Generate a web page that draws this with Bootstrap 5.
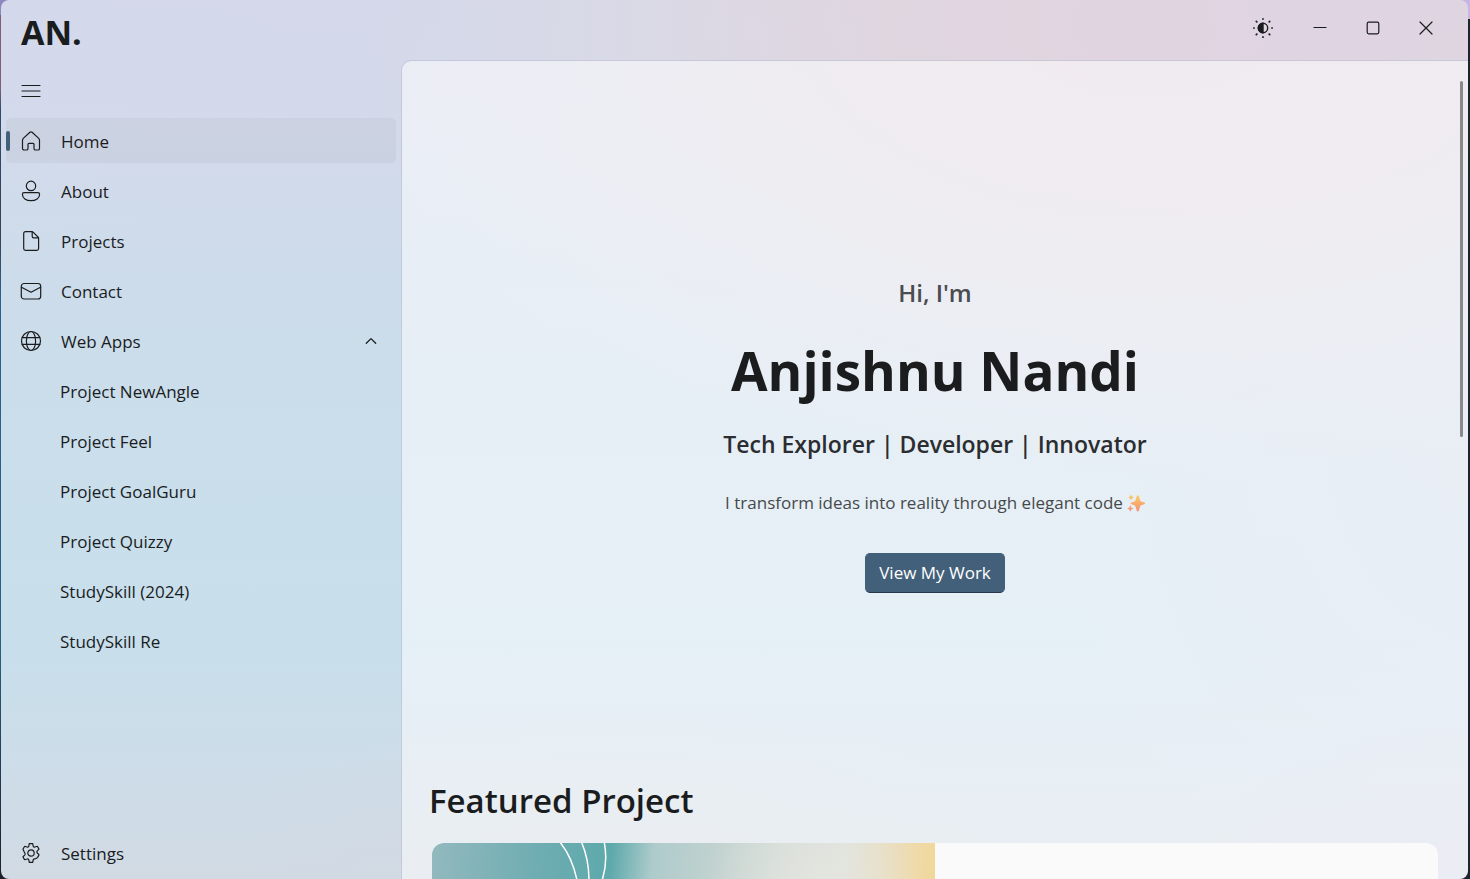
<!DOCTYPE html>
<html lang="en">
<head>
<meta charset="utf-8">
<meta name="viewport" content="width=device-width, initial-scale=1">
<title>Anjishnu Nandi</title>
<link href="https://cdn.jsdelivr.net/npm/bootstrap@5.3.0/dist/css/bootstrap.min.css" rel="stylesheet">
<style>
  :root {
    --ink: #1a1c1e;
    --accent: #43607a;
    --side: 400px;
  }
  body {
    font-family: "Open Sans", "Noto Sans", sans-serif;
    font-size: 17px;
    line-height: 24px;
    color: var(--ink);
    background:
      linear-gradient(90deg, transparent 50%, #c9b5e2 50%) top / 100% 19px no-repeat,
      linear-gradient(90deg, #8e86c0 50%, transparent 50%) top / 100% 15px no-repeat,
      linear-gradient(90deg, transparent 50%, #1d2430 50%),
      linear-gradient(#7d5f74 0, #7d5f74 90px, #2c4d70 110px, #3b3f52 230px, #2a6290 300px, #2a5f80 650px, #1d1c2c 100%);
  }
  svg { display: block; fill: none; stroke-linecap: round; stroke-linejoin: round; }
  .line-icon { stroke: currentColor; }

  /* App window with its soft mesh background */
  .app-window {
    margin: 0 2px 0 1px;
    border-radius: 8px;
    background:
      radial-gradient(ellipse 24% 30% at 92% 0, #dfd5e2 0, transparent 100%),
      radial-gradient(ellipse 54% 52% at 78% 3%, #e2d4df 0, #e0d6dfdd 40%, #dcdae480 72%, transparent 100%),
      radial-gradient(ellipse 40% 30% at 22% 0, #d4d8ea 0, transparent 100%),
      radial-gradient(ellipse 30% 60% at 102% 50%, #d3d9e8cc 0, transparent 100%),
      radial-gradient(ellipse 28% 20% at 42% 100%, #d2d9e3 0, transparent 100%),
      radial-gradient(ellipse 24% 20% at 102% 100%, #d5d6e8 0, transparent 100%),
      linear-gradient(#d4d9eb 0, #d2dbeb 15%, #cddcea 32%, #cadeeb 50%, #c8dfeb 74%, #cddde9 87%, #d1dae3 100%);
  }
  .title-bar { height: 60px; padding: 0 16px 0 20px; }
  .brand { font-size: 34px; line-height: 56px; padding-top: 4px; font-weight: 700; color: var(--ink); }
  .caption-btn {
    width: 53px; height: 40px; padding: 0; border: 0; border-radius: 5px;
    display: grid; place-items: center; color: var(--ink);
  }
  .caption-btn:hover { background: #00000010; }

  .side-pane { width: var(--side); padding: 8px 5px 4px; }
  .side-item {
    height: 45px; margin-bottom: 5px; padding: 0 15px;
    border: 0; border-radius: 5px; background: transparent; color: var(--ink); gap: 20px;
    text-align: left; width: 100%;
  }
  .side-item:hover { color: var(--ink); background: #00000008; }
  .side-item.active { background: #00000009; color: var(--ink); position: relative; }
  .side-item.active::before {
    content: ""; position: absolute; left: 0; top: 13px; height: 20px; width: 4px;
    border-radius: 2px; background: var(--accent);
  }
  .side-item span { padding-top: 2px; }
  .side-child { padding-top: 2px; padding-left: 54px; }

  .page-pane {
    border: 1px solid #b9bfd4a0; border-right: 0; border-bottom: 0;
    border-radius: 10px 0 8px 0;
    background: #ffffff87; background-clip: padding-box;
    position: relative;
  }
  .page-scroll { scrollbar-width: none; }
  .page-scroll::-webkit-scrollbar { display: none; }
  .scroll-thumb {
    position: absolute; top: 20px; right: 5px; width: 3px; height: 43.5%;
    border-radius: 2px; background: #89898d;
  }
  .hero { padding: 216px 30px 184px; }
  .hero-hi { font-size: 24px; line-height: 32px; font-weight: 600; color: #4a4c4f; }
  .hero-sub { font-size: 23px; line-height: 32px; font-weight: 600; color: #2b2d30; }
  .hero-title { font-size: 53px; line-height: 72px; font-weight: 700; margin: 26px 0 21px; }
  .hero-line { color: #46494b; margin: 31px 0 38px; }
  .btn-accent {
    --bs-btn-color: #fff; --bs-btn-bg: var(--accent); --bs-btn-border-color: var(--accent);
    --bs-btn-hover-color: #fff; --bs-btn-hover-bg: #4d6a84; --bs-btn-hover-border-color: #4d6a84;
    --bs-btn-font-size: 17px; --bs-btn-line-height: 24px;
    --bs-btn-padding-x: 13px; --bs-btn-padding-y: 7px; --bs-btn-border-radius: 5px;
    border-bottom-color: #26374b;
  }
  .featured { padding: 0 30px 30px; }
  .section-head { font-size: 33px; line-height: 48px; font-weight: 600; margin: 0 0 18px -3px; }
  .feature { height: 300px; border-radius: 12px; background: #fafafa; }
  .feature-art {
    background:
      radial-gradient(ellipse 22% 60% at 76% 30%, #e6e6e0 0, transparent 100%),
      linear-gradient(95deg, #92b9be 0, #6fadb2 20%, #5da9ab 34%, #aecbcb 42%, #c3d3d0 55%, #dfe3dc 78%, #ecdcb8 88%, #f4d588 100%);
  }
</style>
</head>
<body>
<div class="app-window vh-100 d-flex flex-column overflow-hidden">
  <header class="title-bar d-flex align-items-center justify-content-between flex-shrink-0">
    <a class="brand text-decoration-none" href="#">AN.</a>
    <div class="d-flex align-items-center pb-1">
      <button class="btn caption-btn me-1" type="button" aria-label="Toggle theme">
        <svg class="line-icon" width="22" height="22" viewBox="0 0 22 22" stroke-width="1.4">
          <circle cx="11" cy="11" r="4.7"/>
          <path d="M11 6.3a4.7 4.7 0 0 0 0 9.4z" fill="currentColor"/>
          <path d="M11 1.8v.3M11 19.9v.3M1.8 11h.3M19.9 11h.3M4.3 4.3l.5.5M17.2 17.2l.5.5M4.3 17.7l.5-.5M17.2 4.8l.5-.5" stroke-width="1.7"/>
        </svg>
      </button>
      <button class="btn caption-btn" type="button" aria-label="Minimize">
        <svg class="line-icon" width="14" height="14" viewBox="0 0 14 14" stroke-width="1.2"><path d="M1 6.5h12"/></svg>
      </button>
      <button class="btn caption-btn" type="button" aria-label="Maximize">
        <svg class="line-icon" width="14" height="14" viewBox="0 0 14 14" stroke-width="1.2"><rect x="1.2" y="1.2" width="11.6" height="11.6" rx="1.5"/></svg>
      </button>
      <button class="btn caption-btn" type="button" aria-label="Close">
        <svg class="line-icon" width="14" height="14" viewBox="0 0 14 14" stroke-width="1.2"><path d="M1 1l12 12M13 1L1 13"/></svg>
      </button>
    </div>
  </header>

  <div class="d-flex flex-grow-1 overflow-hidden">
    <nav class="side-pane d-flex flex-column flex-shrink-0" aria-label="Main">
      <button class="side-item d-flex align-items-center flex-shrink-0" type="button" aria-label="Toggle navigation">
        <svg class="line-icon" width="20" height="20" viewBox="0 0 20 20" stroke-width="1.2"><path d="M1 4.5h18M1 10h18M1 15.5h18"/></svg>
      </button>
      <a class="side-item active d-flex align-items-center text-decoration-none flex-shrink-0" href="#" aria-current="page">
        <svg class="line-icon" width="20" height="20" viewBox="0 0 20 20" stroke-width="1.2"><path d="M8.900 1.300a1.600 1.600 0 0 1 2.200 0l6.600 6.100c.5.5.8 1.100.8 1.800v8.200c0 .9-.7 1.600-1.600 1.600h-2.300c-.9 0-1.600-.7-1.600-1.600v-4.100a1 1 0 0 0-1-1H8a1 1 0 0 0-1 1v4.100c0 .9-.7 1.600-1.600 1.600H3.100c-.9 0-1.600-.7-1.600-1.600V9.200c0-.7.3-1.300.8-1.800z"/></svg>
        <span>Home</span>
      </a>
      <a class="side-item d-flex align-items-center text-decoration-none flex-shrink-0" href="#about">
        <svg class="line-icon" width="20" height="20" viewBox="0 0 20 20" stroke-width="1.2" overflow="visible"><circle cx="10" cy="4.900" r="4.700"/><path d="M3 11.600h14c.9 0 1.600.7 1.600 1.600 0 3.900-3.700 6.500-8.600 6.500s-8.600-2.600-8.600-6.500c0-.9.7-1.600 1.600-1.600z"/></svg>
        <span>About</span>
      </a>
      <a class="side-item d-flex align-items-center text-decoration-none flex-shrink-0" href="#projects">
        <svg class="line-icon" width="20" height="20" viewBox="0 0 20 20" stroke-width="1.2"><path d="M4.500.6h6.300c.5 0 1 .2 1.300.5l4.900 4.900c.4.4.6.8.6 1.300v10.300c0 1-.8 1.800-1.800 1.800H4.500c-1 0-1.800-.8-1.800-1.800V2.400c0-1 .8-1.800 1.800-1.800z"/><path d="M11.200.8v4.400c0 .9.7 1.600 1.600 1.600h4.500"/></svg>
        <span>Projects</span>
      </a>
      <a class="side-item d-flex align-items-center text-decoration-none flex-shrink-0" href="#contact">
        <svg class="line-icon" width="20" height="20" viewBox="0 0 20 20" stroke-width="1.2" overflow="visible"><rect x="0.300" y="2.500" width="19.400" height="15.500" rx="2.800"/><path d="M.5 6.300l9.500 5 9.500-5"/></svg>
        <span>Contact</span>
      </a>
      <button class="side-item d-flex align-items-center flex-shrink-0" type="button" data-bs-toggle="collapse" data-bs-target="#webApps" aria-expanded="true" aria-controls="webApps">
        <svg class="line-icon" width="20" height="20" viewBox="0 0 20 20" stroke-width="1.2" overflow="visible"><circle cx="10" cy="10" r="9.500"/><ellipse cx="10" cy="10" rx="4.600" ry="9.500"/><path d="M1.200 6.700h17.600M1.200 13.300h17.600"/></svg>
        <span>Web Apps</span>
        <svg class="line-icon ms-auto" width="20" height="20" viewBox="0 0 20 20" stroke-width="1.3"><path d="M5.300 12.300L10 7.600l4.700 4.700"/></svg>
      </button>
      <div class="collapse show" id="webApps">
        <a class="side-item side-child d-flex align-items-center text-decoration-none" href="#newangle">Project NewAngle</a>
        <a class="side-item side-child d-flex align-items-center text-decoration-none" href="#feel">Project Feel</a>
        <a class="side-item side-child d-flex align-items-center text-decoration-none" href="#goalguru">Project GoalGuru</a>
        <a class="side-item side-child d-flex align-items-center text-decoration-none" href="#quizzy">Project Quizzy</a>
        <a class="side-item side-child d-flex align-items-center text-decoration-none" href="#studyskill-2024">StudySkill (2024)</a>
        <a class="side-item side-child d-flex align-items-center text-decoration-none" href="#studyskill-re">StudySkill Re</a>
      </div>
      <a class="side-item d-flex align-items-center text-decoration-none flex-shrink-0 mt-auto mb-0" href="#settings">
        <svg class="line-icon" width="20" height="20" viewBox="0 0 20 20" stroke-width="1.2" overflow="visible"><circle cx="10" cy="10" r="3.200"/><path d="M8.300.7a9.600 9.600 0 0 1 3.400 0l.5 2.300c.2.800 1 1.300 1.800 1l2.300-.7a9.500 9.500 0 0 1 1.700 2.900l-1.700 1.700c-.6.600-.6 1.500 0 2.100l1.700 1.700a9.500 9.500 0 0 1-1.700 3L14 16c-.8-.3-1.600.2-1.800 1l-.5 2.300a9.600 9.600 0 0 1-3.400 0L7.800 17c-.2-.8-1-1.300-1.800-1l-2.300.7A9.500 9.500 0 0 1 2 13.700l1.700-1.600c.6-.6.6-1.600 0-2.200L2 6.300a9.500 9.500 0 0 1 1.700-3L6 4c.8.300 1.600-.2 1.800-1z"/></svg>
        <span>Settings</span>
      </a>
    </nav>

    <main class="page-pane flex-grow-1 overflow-hidden">
      <div class="page-scroll h-100 overflow-auto">
        <section class="hero text-center">
          <p class="hero-hi mb-0">Hi, I'm</p>
          <h1 class="hero-title">Anjishnu Nandi</h1>
          <p class="hero-sub mb-0">Tech Explorer | Developer | Innovator</p>
          <p class="hero-line d-flex justify-content-center align-items-center gap-1">
            I transform ideas into reality through elegant code
            <svg width="18" height="18" viewBox="0 0 18 18" role="img" aria-label="sparkles">
              <defs><linearGradient id="spark" x1="0" y1="0" x2="0" y2="1"><stop offset="0" stop-color="#fccb62"/><stop offset="1" stop-color="#f58f78"/></linearGradient></defs>
              <g fill="url(#spark)"><path d="M10.800 1.300q.8 0 1 .8l1.300 4.200q.3.900 1.200 1.200l3 1q.7.300.7.900t-.7.900l-3 1q-.9.300-1.200 1.200l-1.300 4.200q-.2.800-1 .8t-1-.8l-1.300-4.200q-.3-.9-1.200-1.200l-3-1q-.7-.3-.7-.9t.7-.9l3-1q.9-.3 1.200-1.200l1.300-4.200q.2-.8 1-.8z"/><path d="M4 .3l1 2.200 2 .9-2 .9-1 2.200-1-2.200-2-.9 2-.9zM3.300 11l1 2.400 2.200 1-2.200 1-1 2.400-1-2.400-2.200-1 2.200-1z"/></g>
            </svg>
          </p>
          <button class="btn btn-accent" type="button">View My Work</button>
        </section>
        <section class="featured">
          <h2 class="section-head">Featured Project</h2>
          <div class="feature row g-0 overflow-hidden">
            <div class="feature-art col-6 h-100">
              <svg class="w-100 h-100" viewBox="0 0 503 300" preserveAspectRatio="xMinYMin slice" stroke="#fff" stroke-width="1.500">
                <path d="M127-2c12 14 19 35 21 60M149-2c9 20 10 45 4 70M172-2c5 24-1 46-16 66"/>
              </svg>
            </div>
            <div class="col-6"></div>
          </div>
        </section>
      </div>
      <div class="scroll-thumb" aria-hidden="true"></div>
    </main>
  </div>
</div>
<script src="https://cdn.jsdelivr.net/npm/bootstrap@5.3.0/dist/js/bootstrap.bundle.min.js"></script>
</body>
</html>
